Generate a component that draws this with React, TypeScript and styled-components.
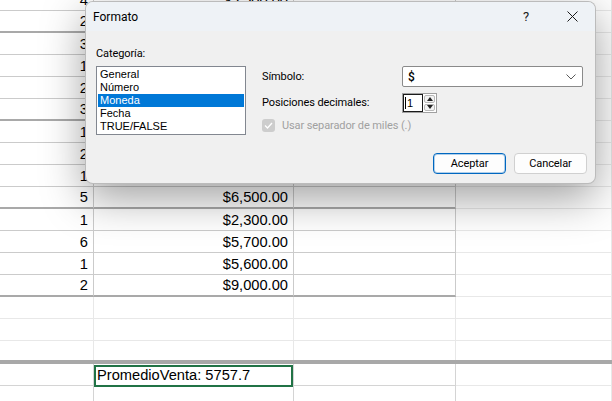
import React from 'react';
import styled, { createGlobalStyle } from 'styled-components';

const GlobalStyle = createGlobalStyle`
  html, body { margin: 0; padding: 0; background: #fff; }
  body { overflow: hidden; }
  * { box-sizing: border-box; }
`;

const Page = styled.div`
  position: relative;
  width: 612px;
  height: 401px;
  overflow: hidden;
  background: #fff;
`;

const Sheet = styled.div`
  display: flex;
  flex-direction: column;
  margin-top: -11px;
  font-family: "Liberation Sans", Arial, sans-serif;
  font-size: 14.67px;
  color: #000;
`;

const Row = styled.div<{ $h?: number }>`
  display: grid;
  grid-template-columns: 94px 200px 162px 1fr;
  height: ${(p) => p.$h ?? 22}px;
  flex: none;
`;

type Tone = 'table' | 'light' | 'mid';
const toneColor: Record<Tone, string> = { table: '#cbcbcb', light: '#e8e8e8', mid: '#d4d4d4' };

const Cell = styled.div<{ $tone: Tone; $thick?: boolean; $left?: boolean; $noBottom?: boolean; $selected?: boolean }>`
  position: relative;
  display: flex;
  align-items: flex-end;
  justify-content: ${(p) => (p.$left ? 'flex-start' : 'flex-end')};
  padding: 0 5px 2px 3px;
  line-height: 16px;
  white-space: nowrap;
  border-right: 1px solid ${(p) => toneColor[p.$tone]};
  border-bottom: ${(p) =>
    p.$noBottom ? 'none' : p.$thick ? '2px solid #a9a9a9' : `1px solid ${toneColor[p.$tone]}`};
  ${(p) =>
    p.$selected &&
    `&::after {
      content: '';
      position: absolute;
      left: 0; right: 0; top: 1px; bottom: -2px;
      border: 2px solid #217346;
    }`}
`;

const Band = styled.div`
  height: 4px;
  flex: none;
  background: #a8a8a8;
`;

/* ---------- Dialog ---------- */

const Dialog = styled.div`
  position: absolute;
  left: 85px;
  top: 1px;
  width: 511px;
  height: 183px;
  border: 1px solid rgba(0, 0, 0, 0.22);
  border-radius: 8px;
  background: #f0f0f0;
  box-shadow: 0 14px 44px rgba(0, 0, 0, 0.38);
  overflow: hidden;
  display: flex;
  flex-direction: column;
  font-family: Roboto, "Segoe UI", sans-serif;
  font-size: 11px;
  letter-spacing: -0.1px;
  color: #000;
`;

const TitleBar = styled.div`
  height: 29px;
  flex: none;
  display: flex;
  align-items: center;
  background: #eef2f6;
`;

const Title = styled.div`
  flex: 1;
  padding-left: 7px;
  font-size: 12px;
  letter-spacing: 0;
`;

const CaptionButton = styled.div`
  width: 46px;
  height: 29px;
  display: flex;
  align-items: center;
  justify-content: center;
  font-size: 13px;
  color: #1a1a1a;
`;

const Body = styled.div`
  flex: 1;
  display: flex;
  flex-direction: column;
  padding: 15px 8px 9px 10px;
`;

const Main = styled.div`
  display: flex;
  gap: 16px;
`;

const LeftCol = styled.div`
  width: 150px;
  display: flex;
  flex-direction: column;
  gap: 4px;
`;

const Label = styled.div<{ $disabled?: boolean }>`
  line-height: 16px;
  color: ${(p) => (p.$disabled ? '#a0a0a0' : '#000')};
  white-space: nowrap;
`;

const ListBox = styled.div`
  height: 69px;
  border: 1px solid #828790;
  background: #fff;
  padding: 1px 1px 0;
  font-family: "Liberation Sans", Arial, sans-serif;
  font-size: 11px;
  letter-spacing: 0;
`;

const ListItem = styled.div<{ $selected?: boolean }>`
  height: 13px;
  line-height: 13px;
  padding-left: 2px;
  background: ${(p) => (p.$selected ? '#0078d7' : 'transparent')};
  color: ${(p) => (p.$selected ? '#fff' : '#000')};
`;

const RightCol = styled.div`
  padding-top: 20px;
  display: grid;
  grid-template-columns: 140px 181px;
  grid-template-rows: 21px 20px 13px;
  row-gap: 6px;
  align-items: center;
  align-content: start;
`;

const Select = styled.div`
  height: 21px;
  border: 1px solid #8a8a8a;
  border-radius: 2px;
  background: #fff;
  display: flex;
  align-items: center;
  justify-content: space-between;
  padding: 0 6px 0 5px;
  font-size: 12px;
  font-weight: 500;
`;

const SpinBox = styled.div`
  width: 35px;
  height: 20px;
  border: 1px solid #a0a0a0;
  background: #fff;
  display: flex;
  align-items: stretch;
`;

const SpinInput = styled.div`
  flex: 1;
  border: 1px solid #1a1a1a;
  display: flex;
  align-items: center;
  padding-left: 1px;
  font-family: "Liberation Sans", Arial, sans-serif;
  font-size: 11px;
`;

const Caret = styled.span`
  display: inline-block;
  width: 1px;
  height: 12px;
  background: #000;
  margin-right: 1px;
`;

const SpinButtons = styled.div`
  width: 13px;
  display: flex;
  flex-direction: column;
  padding: 1px;
  gap: 1px;
`;

const SpinBtn = styled.div`
  flex: 1;
  border: 1px solid #b8b8b8;
  border-radius: 2px;
  background: #f3f3f3;
  display: flex;
  align-items: center;
  justify-content: center;
`;

const CheckRow = styled.div`
  grid-column: 1 / -1;
  display: flex;
  align-items: center;
  gap: 7px;
`;

const CheckBox = styled.div`
  width: 13px;
  height: 13px;
  border-radius: 3px;
  background: #cdcdcd;
  display: flex;
  align-items: center;
  justify-content: center;
`;

const Footer = styled.div`
  margin-top: auto;
  display: flex;
  justify-content: flex-end;
  gap: 8px;
`;

const Button = styled.div<{ $primary?: boolean }>`
  width: 73px;
  height: 21px;
  border-radius: 4px;
  background: #fdfdfd;
  border: 1px solid ${(p) => (p.$primary ? '#0067c0' : '#d0d0d0')};
  box-shadow: ${(p) => (p.$primary ? 'inset 0 0 0 1px rgba(0,103,192,0.3)' : 'none')};
  display: flex;
  align-items: center;
  justify-content: center;
`;

const rows: [string, string, boolean][] = [
  ['4', '$5,500.00', false],
  ['2', '$4,200.00', true],
  ['3', '$3,100.00', false],
  ['1', '$7,800.00', false],
  ['2', '$6,300.00', false],
  ['3', '$4,900.00', true],
  ['1', '$8,200.00', false],
  ['2', '$5,100.00', false],
  ['1', '$7,400.00', false],
  ['5', '$6,500.00', true],
  ['1', '$2,300.00', false],
  ['6', '$5,700.00', false],
  ['1', '$5,600.00', false],
  ['2', '$9,000.00', true],
];

export default function App() {
  return (
    <Page>
      <GlobalStyle />
      <Sheet>
        {rows.map(([q, v, thick], i) => (
          <Row key={i}>
            <Cell $tone="table" $thick={thick}>{q}</Cell>
            <Cell $tone="table" $thick={thick}>{v}</Cell>
            <Cell $tone="table" $thick={thick} />
            <Cell $tone="light" />
          </Row>
        ))}
        <Row>
          <Cell $tone="light" /><Cell $tone="light" /><Cell $tone="light" /><Cell $tone="light" />
        </Row>
        <Row>
          <Cell $tone="light" /><Cell $tone="light" /><Cell $tone="light" /><Cell $tone="light" />
        </Row>
        <Row $h={19}>
          <Cell $tone="light" $noBottom /><Cell $tone="light" $noBottom /><Cell $tone="light" $noBottom /><Cell $tone="light" $noBottom />
        </Row>
        <Band />
        <Row>
          <Cell $tone="mid" />
          <Cell $tone="mid" $left $selected>PromedioVenta: 5757.7</Cell>
          <Cell $tone="mid" />
          <Cell $tone="light" />
        </Row>
        <Row>
          <Cell $tone="mid" /><Cell $tone="mid" /><Cell $tone="mid" /><Cell $tone="light" />
        </Row>
      </Sheet>

      <Dialog>
        <TitleBar>
          <Title>Formato</Title>
          <CaptionButton>?</CaptionButton>
          <CaptionButton>
            <svg width="11" height="11" viewBox="0 0 11 11">
              <path d="M0.5 0.5 L10.5 10.5 M10.5 0.5 L0.5 10.5" stroke="#1a1a1a" strokeWidth="1" fill="none" />
            </svg>
          </CaptionButton>
        </TitleBar>
        <Body>
          <Main>
            <LeftCol>
              <Label>Categoría:</Label>
              <ListBox>
                <ListItem>General</ListItem>
                <ListItem>Número</ListItem>
                <ListItem $selected>Moneda</ListItem>
                <ListItem>Fecha</ListItem>
                <ListItem>TRUE/FALSE</ListItem>
              </ListBox>
            </LeftCol>
            <RightCol>
              <Label>Símbolo:</Label>
              <Select>
                <span>$</span>
                <svg width="10" height="6" viewBox="0 0 10 6">
                  <path d="M0.5 0.5 L5 5 L9.5 0.5" stroke="#5a5a5a" strokeWidth="1" fill="none" />
                </svg>
              </Select>
              <Label>Posiciones decimales:</Label>
              <SpinBox>
                <SpinInput>
                  <Caret />1
                </SpinInput>
                <SpinButtons>
                  <SpinBtn>
                    <svg width="6" height="4" viewBox="0 0 6 4"><path d="M0 4 L3 0 L6 4 Z" fill="#222" /></svg>
                  </SpinBtn>
                  <SpinBtn>
                    <svg width="6" height="4" viewBox="0 0 6 4"><path d="M0 0 L6 0 L3 4 Z" fill="#222" /></svg>
                  </SpinBtn>
                </SpinButtons>
              </SpinBox>
              <CheckRow>
                <CheckBox>
                  <svg width="9" height="7" viewBox="0 0 9 7">
                    <path d="M1 3.5 L3.5 6 L8 1" stroke="#fff" strokeWidth="1.3" fill="none" />
                  </svg>
                </CheckBox>
                <Label $disabled>Usar separador de miles (.)</Label>
              </CheckRow>
            </RightCol>
          </Main>
          <Footer>
            <Button $primary>Aceptar</Button>
            <Button>Cancelar</Button>
          </Footer>
        </Body>
      </Dialog>
    </Page>
  );
}
